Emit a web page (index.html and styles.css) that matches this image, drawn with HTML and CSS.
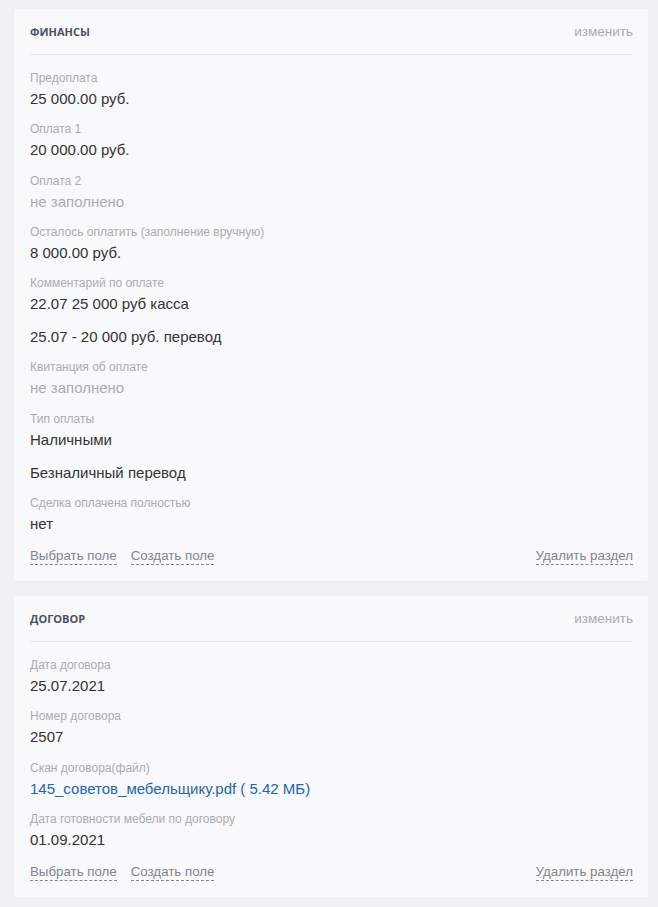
FILE: index.html
```html
<!DOCTYPE html>
<html lang="ru">
<head>
<meta charset="utf-8">
<title>Сделка</title>
<link rel="stylesheet" href="styles.css">
</head>
<body>
<div class="page">
  <section class="card">
    <div class="card-head">
      <span class="card-title">Финансы</span>
      <span class="card-edit">изменить</span>
    </div>
    <div class="fields">
      <div class="field">
        <div class="label">Предоплата</div>
        <div class="value">25 000.00 руб.</div>
      </div>
      <div class="field">
        <div class="label">Оплата 1</div>
        <div class="value">20 000.00 руб.</div>
      </div>
      <div class="field">
        <div class="label">Оплата 2</div>
        <div class="value empty">не заполнено</div>
      </div>
      <div class="field">
        <div class="label">Осталось оплатить (заполнение вручную)</div>
        <div class="value">8 000.00 руб.</div>
      </div>
      <div class="field">
        <div class="label">Комментарий по оплате</div>
        <div class="value">22.07 25 000 руб касса</div>
        <div class="value">25.07 - 20 000 руб. перевод</div>
      </div>
      <div class="field">
        <div class="label">Квитанция об оплате</div>
        <div class="value empty">не заполнено</div>
      </div>
      <div class="field">
        <div class="label">Тип оплаты</div>
        <div class="value">Наличными</div>
        <div class="value">Безналичный перевод</div>
      </div>
      <div class="field">
        <div class="label">Сделка оплачена полностью</div>
        <div class="value">нет</div>
      </div>
    </div>
    <div class="card-foot">
      <div class="foot-left">
        <span class="dash-link">Выбрать поле</span>
        <span class="dash-link">Создать поле</span>
      </div>
      <span class="dash-link">Удалить раздел</span>
    </div>
  </section>

  <section class="card">
    <div class="card-head">
      <span class="card-title">Договор</span>
      <span class="card-edit">изменить</span>
    </div>
    <div class="fields">
      <div class="field">
        <div class="label">Дата договора</div>
        <div class="value">25.07.2021</div>
      </div>
      <div class="field">
        <div class="label">Номер договора</div>
        <div class="value">2507</div>
      </div>
      <div class="field">
        <div class="label">Скан договора(файл)</div>
        <div class="value file">145_советов_мебельщику.pdf ( 5.42 МБ)</div>
      </div>
      <div class="field">
        <div class="label">Дата готовности мебели по договору</div>
        <div class="value">01.09.2021</div>
      </div>
    </div>
    <div class="card-foot">
      <div class="foot-left">
        <span class="dash-link">Выбрать поле</span>
        <span class="dash-link">Создать поле</span>
      </div>
      <span class="dash-link">Удалить раздел</span>
    </div>
  </section>
</div>
</body>
</html>
```

FILE: styles.css
```css
html, body {
  margin: 0;
  padding: 0;
  background: #eef2f4;
}

body {
  font-family: "Liberation Sans", Arial, sans-serif;
  color: #333;
}

.page {
  padding: 9px 10px 0 14px;
  display: flex;
  flex-direction: column;
  gap: 15px;
}

.card {
  background: #f8f9fa;
  border-radius: 2px;
  padding: 0 15px 0 16px;
  box-shadow: 0 1px 0 rgba(0, 0, 0, 0.03);
}

.card-head {
  display: flex;
  justify-content: space-between;
  align-items: center;
  padding: 15px 0 14px;
  border-bottom: 1px solid #e6e9ec;
  line-height: 16px;
}

.card-title {
  font-family: "Open Sans", "Liberation Sans", sans-serif;
  font-weight: 700;
  font-size: 11px;
  text-transform: uppercase;
  color: #4a525e;
}

.card-edit {
  font-size: 13.5px;
  color: #a8adb4;
}

.fields {
  padding-top: 15px;
  display: flex;
  flex-direction: column;
  gap: 12.3px;
}

.field {
  display: flex;
  flex-direction: column;
  gap: 13px;
}

.label {
  font-size: 12px;
  line-height: 16px;
  color: #a8adb4;
  margin-bottom: -10px;
}

.value {
  font-size: 15px;
  line-height: 20px;
  color: #333;
}

.value.empty {
  color: #a8adb4;
}

.value.file {
  color: #2067b0;
}

.card-foot {
  display: flex;
  justify-content: space-between;
  align-items: center;
  padding: 14px 0 16px;
  line-height: 18px;
}

.foot-left {
  display: flex;
  gap: 14px;
}

.dash-link {
  font-size: 13.3px;
  color: #80868e;
  border-bottom: 1px dashed #80868e;
  line-height: 16px;
}
```
